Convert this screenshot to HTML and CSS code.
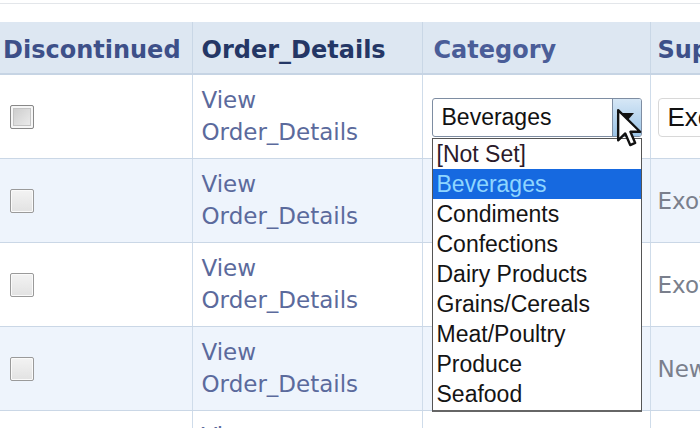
FILE: index.html
```html
<!DOCTYPE html>
<html>
<head>
<meta charset="utf-8">
<link rel="stylesheet" href="styles.css">
</head>
<body>
<div class="frame">
  <table class="grid">
    <colgroup>
      <col class="c1"><col class="c2"><col class="c3"><col class="c4">
    </colgroup>
    <thead>
      <tr>
        <th>Discontinued</th>
        <th class="dark">Order_Details</th>
        <th class="cat">Category</th>
        <th class="sp">Supplier</th>
      </tr>
    </thead>
    <tbody>
      <tr>
        <td><span class="chk chk-on"></span></td>
        <td><a class="lnk">View<br>Order_Details</a></td>
        <td class="catcell">
          <div class="sel">
            <span class="sel-text">Beverages</span>
            <span class="sel-btn"><span class="tri"></span></span>
          </div>
          <ul class="drop">
            <li class="notset">[Not Set]</li>
            <li class="hi">Beverages</li>
            <li>Condiments</li>
            <li>Confections</li>
            <li>Dairy Products</li>
            <li>Grains/Cereals</li>
            <li>Meat/Poultry</li>
            <li>Produce</li>
            <li>Seafood</li>
          </ul>
          <svg class="cursor" width="28" height="41" viewBox="0 0 13 19">
            <path d="M1 1 L1 15 L4.3 11.8 L6.6 17.2 L8.9 16.2 L6.7 11 L11.2 11 Z" fill="#fff" stroke="#111" stroke-width="1.1" stroke-linejoin="round"/>
          </svg>
        </td>
        <td><div class="sel2">Exotic Liquids</div></td>
      </tr>
      <tr class="alt">
        <td><span class="chk"></span></td>
        <td><a class="lnk">View<br>Order_Details</a></td>
        <td></td>
        <td class="sup">Exotic Liquids</td>
      </tr>
      <tr>
        <td><span class="chk"></span></td>
        <td><a class="lnk">View<br>Order_Details</a></td>
        <td></td>
        <td class="sup">Exotic Liquids</td>
      </tr>
      <tr class="alt">
        <td><span class="chk"></span></td>
        <td><a class="lnk">View<br>Order_Details</a></td>
        <td></td>
        <td class="sup">New Orleans</td>
      </tr>
      <tr>
        <td><span class="chk"></span></td>
        <td><a class="lnk">View<br>Order_Details</a></td>
        <td></td>
        <td class="sup">Grandma Kelly's</td>
      </tr>
    </tbody>
  </table>
</div>
</body>
</html>
```

FILE: styles.css
```css
html, body {
  margin: 0;
  padding: 0;
  background: #ffffff;
  overflow: hidden;
}
.frame {
  margin-top: 3px;
  border-top: 1px solid #e3e6ea;
  padding-top: 18px;
  width: 900px;
}
.grid {
  border-collapse: collapse;
  table-layout: fixed;
  width: 900px;
  font-family: "DejaVu Sans", Verdana, sans-serif;
}
.c1 { width: 192px; }
.c2 { width: 230px; }
.c3 { width: 228px; }
.c4 { width: 250px; }
.grid th {
  height: 52px;
  padding: 4px 0 0 4px;
  text-align: left;
  background: #dde7f2;
  color: #3d5089;
  font-size: 24px;
  font-weight: bold;
  border-left: 1px solid #c9d7e6;
  border-bottom: 2px solid #c6d4e4;
  white-space: nowrap;
  overflow: hidden;
  vertical-align: middle;
  box-sizing: border-box;
}
.grid th:first-child { border-left: none; padding-left: 3px; }
.grid th.dark { color: #243766; padding-left: 9px; }
.grid th.cat { padding-left: 11px; color: #4a5d98; }
.grid th.sp { padding-left: 7px; }
.grid td {
  height: 83px;
  padding: 0;
  border-left: 1px solid #cfdcea;
  border-bottom: 1px solid #cad7e6;
  vertical-align: middle;
  white-space: nowrap;
  overflow: visible;
}
.grid td:first-child { border-left: none; padding-left: 10px; }
.grid tr.alt td { background: #eef4fc; }
.chk {
  display: block;
  width: 22px;
  height: 22px;
  border: 1px solid #9a9a9a;
  border-radius: 2px;
  background: linear-gradient(#f3f3f3, #e2e2e2);
  box-shadow: inset 0 0 0 1px #fafafa;
}
.chk-on {
  border-color: #888;
  background: linear-gradient(135deg, #c8c8c8, #f0f0f0);
  box-shadow: inset 0 0 0 2px #f6f6f6, inset 0 0 0 3px #c4c4c4;
}
.lnk {
  display: block;
  padding-left: 9px;
  color: #5b6a9c;
  font-size: 23px;
  line-height: 32px;
  text-decoration: none;
  margin-top: -1px;
}
.catcell {
  position: relative;
}
.sel {
  margin-left: 9px;
  width: 210px;
  height: 39px;
  box-sizing: border-box;
  border: 1px solid #7e8da2;
  border-radius: 3px;
  display: flex;
  align-items: stretch;
  background: #fff;
  font-family: "Liberation Sans", Arial, sans-serif;
  font-size: 23px;
  color: #111;
  margin-top: 2px;
}
.sel-text {
  flex: 1;
  padding-left: 9px;
  line-height: 37px;
}
.sel-btn {
  width: 29px;
  border-left: 1px solid #7e8da2;
  background: linear-gradient(#d6e7f6, #9cc4e6);
  border-radius: 0 2px 2px 0;
  display: flex;
  justify-content: center;
  padding-top: 14px;
  box-sizing: border-box;
}
.tri {
  width: 0;
  height: 0;
  border-left: 7px solid transparent;
  border-right: 7px solid transparent;
  border-top: 8px solid #111;
}
.drop {
  position: absolute;
  left: 9px;
  top: 63px;
  width: 210px;
  margin: 0;
  padding: 0 0 1px;
  list-style: none;
  background: #fff;
  border: 1px solid #555;
  border-bottom: 2px solid #666;
  box-sizing: border-box;
  font-family: "Liberation Sans", Arial, sans-serif;
  font-size: 23px;
  color: #141414;
  z-index: 2;
}
.drop li {
  height: 30px;
  line-height: 30px;
  padding-left: 4px;
}
.drop li.notset { color: #2a1a2a; }
.drop li.hi {
  background: #1669e0;
  color: #8fd6ff;
}
.cursor {
  position: absolute;
  left: 193px;
  top: 33px;
  z-index: 3;
}
.sel2 {
  margin-left: 7px;
  height: 39px;
  width: 220px;
  box-sizing: border-box;
  border: 1px solid #d8d8d8;
  border-radius: 4px;
  padding-left: 9px;
  font-family: "Liberation Sans", Arial, sans-serif;
  font-size: 26px;
  line-height: 37px;
  color: #111;
  margin-top: 2px;
}
.sup {
  padding-left: 7px !important;
  font-family: "DejaVu Sans", Verdana, sans-serif;
  font-size: 23px;
  color: #7a7f8c;
}
```
